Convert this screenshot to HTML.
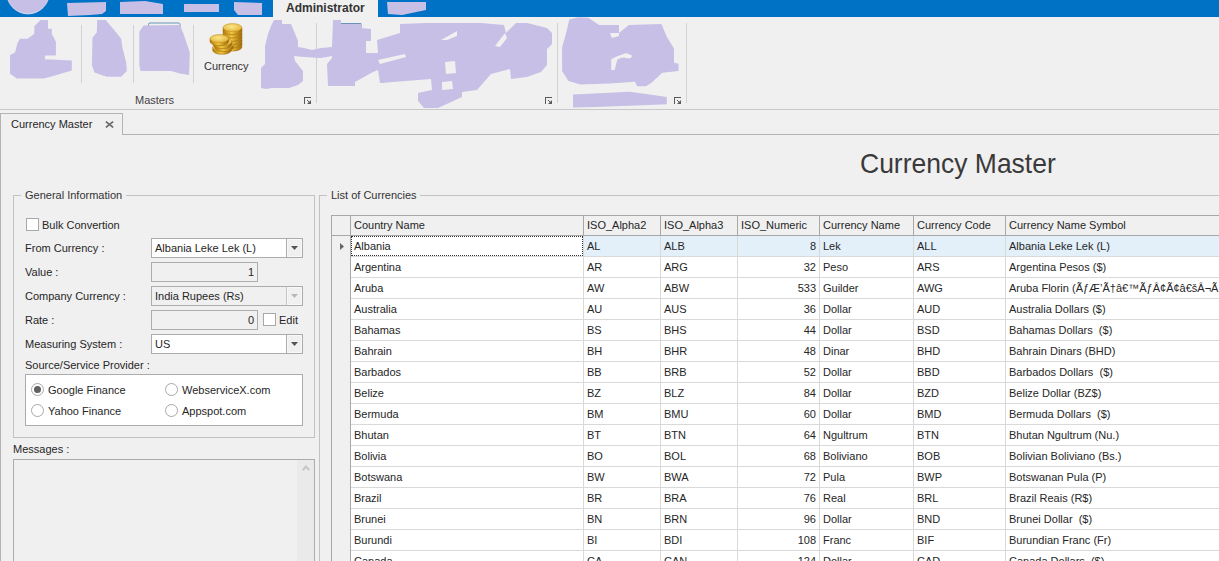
<!DOCTYPE html>
<html><head><meta charset="utf-8">
<style>
html,body{margin:0;padding:0;}
body{width:1219px;height:561px;overflow:hidden;position:relative;background:#f0f0f0;font-family:"Liberation Sans",sans-serif;font-size:11px;color:#262626;}
.a{position:absolute;}
.t{position:absolute;white-space:pre;font-size:11px;line-height:13px;}
.cb{position:absolute;box-sizing:border-box;width:13px;height:13px;border:1px solid #a8a8a8;background:#fff;}
.rb{position:absolute;box-sizing:border-box;width:13px;height:13px;border:1px solid #a8a8a8;border-radius:50%;background:#fff;}
.arr{position:absolute;width:0;height:0;border-left:4px solid transparent;border-right:4px solid transparent;border-top:4px solid #5a5a5a;}
.grid{position:absolute;left:331px;top:215px;width:888px;height:346px;overflow:hidden;background:#fff;}
.gl{position:absolute;background:#d9d9d9;}
.gc{position:absolute;white-space:nowrap;font-size:11px;line-height:13px;overflow:hidden;}
</style></head><body>

<div class="a" style="left:0px;top:0px;width:1219px;height:17px;background:#0072c6;"></div>
<div class="a" style="left:273px;top:0px;width:105px;height:17px;background:#f0f0f0;"></div>
<div class="t" style="left:286px;top:2px;font-weight:bold;font-size:12px;color:#333;">Administrator</div>
<svg class="a" style="left:0;top:0" width="1219" height="110"><g fill="#c7bfe6"><circle cx="28" cy="-7.4" r="21.3" stroke="#e8e8f4" stroke-width="0.8"/><polygon points="67,3 106,2 106,11 102,14 90,15 68,16"/><polygon points="120,2 145,1 163,4 163,14 145,14 120,14"/><polygon points="184,4 219,4 219,12 184,12"/><polygon points="234,2 262,3 262,15 238,15 234,10"/><polygon points="387,2 426,2 426,10 402,15 388,14"/></g></svg>
<div class="a" style="left:81px;top:25px;width:1px;height:58px;background:#d2d2d2;"></div>
<div class="a" style="left:133px;top:25px;width:1px;height:58px;background:#d2d2d2;"></div>
<div class="a" style="left:193px;top:25px;width:1px;height:58px;background:#d2d2d2;"></div>
<div class="a" style="left:316px;top:23px;width:1px;height:80px;background:#d2d2d2;"></div>
<div class="a" style="left:557px;top:23px;width:1px;height:80px;background:#d2d2d2;"></div>
<div class="a" style="left:686px;top:23px;width:1px;height:80px;background:#d2d2d2;"></div>
<svg class="a" style="left:0;top:0" width="1219" height="110"><g fill="#c7bfe6"><path d="M148.5 28 V24.5 Q148.5 23 150 23 H178.5 Q180 23 180 24.5 V28" fill="none" stroke="#6b93b8" stroke-width="1"/><path d="M337 28 V23.5 H361 V28" fill="none" stroke="#6b93b8" stroke-width="1"/><polygon points="40.6,20 48,20 48,28.7 51.8,28.7 51.8,33.7 55.9,41.8 55.9,55.6 44.9,55.6 44.9,59.3 71.8,60.6 71.8,70.5 52.4,76.2 43.7,78.6 16.9,78.6 10,73.7 10,55 15,52.4 17.5,43 20,38.7 27.5,38.7 34.3,33.7 34.3,26.2"/><polygon points="97.2,20 105.6,20 113.1,28.7 121.2,38.7 122.4,47.4 126.2,62.4 126.8,71.1 121.2,76.7 106.8,76.7 94.4,72.4 91.9,64.9 92.5,37.4 96.8,32.5"/><polygon points="143.6,25.6 179.8,25 183.5,33.7 189.8,52.4 189.1,74.9 179.8,73.6 171,71.1 140.5,71.1 139.3,64.9 139.3,31.8"/><polygon points="274,20 282,20 282,24 291,24 294,31 298,41 298,47 304,48 312,50 321,48 332,47 333,20 341,20 341,24 361,24 361,28 371,29 371,41 366,41 366,53 378,53 377,40 400,33 400,24 425,23 481,23 504,25 506,33 516,23 527,23 547,28 552,33 552,44 547,49 547,65 541,72 527,77 511,79 510,69 491,74 477,90 462,92 462,97 438,108 424,108 418,101 418,93 432,90 431,79 380,83 381,65 385,64 385,83 380,83 378,70 373,72 355,82 355,86 328,86 327,64 332,58 332,56 321,58 304,57 294,56 295,61 303,71 303,81 298,85 289,88 272,88 266,89 261,88 261,68 265,64 265,46 268,34 271,26"/><polygon points="569.3,19.5 578.4,17.2 588.3,17.7 599.1,24.9 619,24.9 619,33 628.9,24.9 661.4,24 666.8,36.7 674,48.4 674,62.8 678.5,63.7 678.5,71 662.3,72.8 651.4,82.7 646,86.3 637,86.3 635.2,81.8 609.9,83.6 580.2,84.5 568.4,80.9 562.1,71 562.1,47.5 566.6,31.2"/><polygon points="573,94.4 629.8,91.7 649.6,94.4 666.8,97.1 666.8,104.3 642.4,105.2 595.5,107 573,107.4"/></g><g fill="#f0f0f0"><polygon points="445,62 455,61 456,73 446,74"/><polygon points="442,82 452,81 453,89 442,90"/><polygon points="611.2,70 611.2,59.3 616.5,56.6 626.3,53 632.6,55.7 629.9,58.4 622.8,57.5 617.4,59.3 614.7,70"/><polygon points="378,60 405,54 406,57 380,64"/><polygon points="495,46 505,33 507,38 500,47"/><polygon points="441,40 457,31 457,36 447,40"/><polygon points="610,33 619,33 619,36 612,38"/></g></svg>
<svg class="a" style="left:205px;top:20px" width="42" height="38" viewBox="0 0 42 38"><defs><linearGradient id="cg" x1="0" x2="1"><stop offset="0" stop-color="#b07a08"/><stop offset="0.45" stop-color="#f2c640"/><stop offset="1" stop-color="#9a6400"/></linearGradient><radialGradient id="ct" cx="0.45" cy="0.4" r="0.7"><stop offset="0" stop-color="#fbe88a"/><stop offset="1" stop-color="#e0ac30"/></radialGradient></defs><path d="M18.1 24.1 V27.1 A9.4 4 0 0 0 36.9 27.1 V24.1 Z" fill="url(#cg)" stroke="#9a6a10" stroke-width="0.5"/><ellipse cx="27.5" cy="24.1" rx="9.4" ry="4" fill="url(#ct)" stroke="#c08a20" stroke-width="0.5"/><path d="M18.1 20.799999999999997 V23.799999999999997 A9.4 4 0 0 0 36.9 23.799999999999997 V20.799999999999997 Z" fill="url(#cg)" stroke="#9a6a10" stroke-width="0.5"/><ellipse cx="27.5" cy="20.799999999999997" rx="9.4" ry="4" fill="url(#ct)" stroke="#c08a20" stroke-width="0.5"/><path d="M18.1 17.5 V20.5 A9.4 4 0 0 0 36.9 20.5 V17.5 Z" fill="url(#cg)" stroke="#9a6a10" stroke-width="0.5"/><ellipse cx="27.5" cy="17.5" rx="9.4" ry="4" fill="url(#ct)" stroke="#c08a20" stroke-width="0.5"/><path d="M18.1 14.2 V17.2 A9.4 4 0 0 0 36.9 17.2 V14.2 Z" fill="url(#cg)" stroke="#9a6a10" stroke-width="0.5"/><ellipse cx="27.5" cy="14.2" rx="9.4" ry="4" fill="url(#ct)" stroke="#c08a20" stroke-width="0.5"/><path d="M18.1 10.899999999999999 V13.899999999999999 A9.4 4 0 0 0 36.9 13.899999999999999 V10.899999999999999 Z" fill="url(#cg)" stroke="#9a6a10" stroke-width="0.5"/><ellipse cx="27.5" cy="10.899999999999999" rx="9.4" ry="4" fill="url(#ct)" stroke="#c08a20" stroke-width="0.5"/><path d="M18.1 7.6 V10.6 A9.4 4 0 0 0 36.9 10.6 V7.6 Z" fill="url(#cg)" stroke="#9a6a10" stroke-width="0.5"/><ellipse cx="27.5" cy="7.6" rx="9.4" ry="4" fill="url(#ct)" stroke="#c08a20" stroke-width="0.5"/><path d="M7.699999999999999 27.3 V30.3 A9.3 4 0 0 0 26.3 30.3 V27.3 Z" fill="url(#cg)" stroke="#9a6a10" stroke-width="0.5"/><ellipse cx="17" cy="27.3" rx="9.3" ry="4" fill="url(#ct)" stroke="#c08a20" stroke-width="0.5"/><path d="M9.7 24.5 V27.5 A9.3 4 0 0 0 28.3 27.5 V24.5 Z" fill="url(#cg)" stroke="#9a6a10" stroke-width="0.5"/><ellipse cx="19" cy="24.5" rx="9.3" ry="4" fill="url(#ct)" stroke="#c08a20" stroke-width="0.5"/><path d="M8.2 21.6 V24.6 A9.3 4 0 0 0 26.8 24.6 V21.6 Z" fill="url(#cg)" stroke="#9a6a10" stroke-width="0.5"/><ellipse cx="17.5" cy="21.6" rx="9.3" ry="4" fill="url(#ct)" stroke="#c08a20" stroke-width="0.5"/><path d="M5.0 18.6 V21.6 A9.3 4 0 0 0 23.6 21.6 V18.6 Z" fill="url(#cg)" stroke="#9a6a10" stroke-width="0.5"/><ellipse cx="14.3" cy="18.6" rx="9.3" ry="4" fill="url(#ct)" stroke="#c08a20" stroke-width="0.5"/></svg>
<div class="t" style="left:204px;top:60px;color:#333;">Currency</div>
<div class="t" style="left:135px;top:94px;color:#444;">Masters</div>
<svg class="a" style="left:304px;top:97px" width="8" height="8" shape-rendering="crispEdges"><g fill="#5a5a5a"><rect x="0" y="0" width="7" height="1"/><rect x="0" y="0" width="1" height="7"/><rect x="3" y="3" width="1" height="1"/><rect x="4" y="4" width="1" height="1"/><path d="M7 3 V7 H3 Z" shape-rendering="auto"/></g></svg>
<svg class="a" style="left:545px;top:97px" width="8" height="8" shape-rendering="crispEdges"><g fill="#5a5a5a"><rect x="0" y="0" width="7" height="1"/><rect x="0" y="0" width="1" height="7"/><rect x="3" y="3" width="1" height="1"/><rect x="4" y="4" width="1" height="1"/><path d="M7 3 V7 H3 Z" shape-rendering="auto"/></g></svg>
<svg class="a" style="left:674px;top:97px" width="8" height="8" shape-rendering="crispEdges"><g fill="#5a5a5a"><rect x="0" y="0" width="7" height="1"/><rect x="0" y="0" width="1" height="7"/><rect x="3" y="3" width="1" height="1"/><rect x="4" y="4" width="1" height="1"/><path d="M7 3 V7 H3 Z" shape-rendering="auto"/></g></svg>
<div class="a" style="left:0px;top:109px;width:1219px;height:1px;background:#c8c8c8;"></div>
<div class="a" style="left:0;top:113px;width:123px;height:22px;box-sizing:border-box;border-left:1px solid #b4b4b4;border-top:1px solid #b4b4b4;border-right:1px solid #b4b4b4;"></div>
<div class="a" style="left:122px;top:134px;width:1097px;height:1px;background:#b4b4b4;"></div>
<div class="a" style="left:0px;top:134px;width:1px;height:427px;background:#b4b4b4;"></div>
<div class="t" style="left:11px;top:118px;">Currency Master</div>
<svg class="a" style="left:105px;top:121px" width="9" height="7"><path d="M0.9 0.6 L8.1 6.4 M8.1 0.6 L0.9 6.4" stroke="#6a6a6a" stroke-width="1.7"/></svg>
<div class="t" style="left:860px;top:148px;font-size:28px;line-height:32px;color:#3a3a3a;transform:scaleX(0.946);transform-origin:0 0;">Currency Master</div>
<div class="a" style="left:13px;top:195px;width:1px;height:243px;background:#c2c2c2;"></div>
<div class="a" style="left:314px;top:195px;width:1px;height:243px;background:#c2c2c2;"></div>
<div class="a" style="left:13px;top:437px;width:302px;height:1px;background:#c2c2c2;"></div>
<div class="a" style="left:13px;top:195px;width:8px;height:1px;background:#c2c2c2;"></div>
<div class="a" style="left:126px;top:195px;width:189px;height:1px;background:#c2c2c2;"></div>
<div class="t" style="left:25px;top:189px;color:#333;">General Information</div>
<div class="cb" style="left:26px;top:218px;"></div>
<div class="t" style="left:42px;top:219px;">Bulk Convertion</div>
<div class="t" style="left:25px;top:242px;">From Currency :</div>
<div class="t" style="left:25px;top:266px;">Value :</div>
<div class="t" style="left:25px;top:290px;">Company Currency :</div>
<div class="t" style="left:25px;top:314px;">Rate :</div>
<div class="t" style="left:25px;top:338px;">Measuring System :</div>
<div class="a" style="left:151px;top:238px;width:152px;height:20px;box-sizing:border-box;border:1px solid #acacac;background:#fff;"></div>
<div class="a" style="left:287px;top:239px;width:15px;height:18px;box-sizing:border-box;border:1px solid #f8f8f8;background:#f0f0f0;"></div>
<div class="a" style="left:286px;top:239px;width:1px;height:18px;background:#acacac;"></div>
<svg class="a" style="left:291px;top:246px" width="7" height="4"><path d="M0 0 H7 L3.5 4 Z" fill="#555"/></svg>
<div class="t" style="left:155px;top:242px;">Albania Leke Lek (L)</div>
<div class="a" style="left:151px;top:262px;width:107px;height:20px;box-sizing:border-box;border:1px solid #acacac;background:#f0f0f0;"></div>
<div class="t" style="left:248px;top:266px;width:6px;text-align:right;">1</div>
<div class="a" style="left:151px;top:286px;width:152px;height:20px;box-sizing:border-box;border:1px solid #acacac;background:#f0f0f0;"></div>
<div class="a" style="left:287px;top:287px;width:15px;height:18px;box-sizing:border-box;border:1px solid #f8f8f8;background:#f0f0f0;"></div>
<div class="a" style="left:286px;top:287px;width:1px;height:18px;background:#c4c4c4;"></div>
<svg class="a" style="left:291px;top:294px" width="7" height="4"><path d="M0 0 H7 L3.5 4 Z" fill="#b8b8b8"/></svg>
<div class="t" style="left:155px;top:290px;">India Rupees (Rs)</div>
<div class="a" style="left:151px;top:310px;width:107px;height:20px;box-sizing:border-box;border:1px solid #acacac;background:#f0f0f0;"></div>
<div class="t" style="left:246px;top:314px;width:8px;text-align:right;">0</div>
<div class="cb" style="left:263px;top:313px;"></div>
<div class="t" style="left:279px;top:314px;">Edit</div>
<div class="a" style="left:151px;top:334px;width:152px;height:20px;box-sizing:border-box;border:1px solid #acacac;background:#fff;"></div>
<div class="a" style="left:287px;top:335px;width:15px;height:18px;box-sizing:border-box;border:1px solid #f8f8f8;background:#f0f0f0;"></div>
<div class="a" style="left:286px;top:335px;width:1px;height:18px;background:#acacac;"></div>
<svg class="a" style="left:291px;top:342px" width="7" height="4"><path d="M0 0 H7 L3.5 4 Z" fill="#555"/></svg>
<div class="t" style="left:155px;top:338px;">US</div>
<div class="t" style="left:25px;top:359px;">Source/Service Provider :</div>
<div class="a" style="left:25px;top:374px;width:278px;height:52px;box-sizing:border-box;border:1px solid #acacac;background:#fff;"></div>
<div class="rb" style="left:31px;top:383px;"></div>
<div class="a" style="left:34px;top:386px;width:7px;height:7px;border-radius:50%;background:#606060;"></div>
<div class="t" style="left:48px;top:384px;">Google Finance</div>
<div class="rb" style="left:31px;top:404px;"></div>
<div class="t" style="left:48px;top:405px;">Yahoo Finance</div>
<div class="rb" style="left:165px;top:383px;"></div>
<div class="t" style="left:182px;top:384px;">WebserviceX.com</div>
<div class="rb" style="left:165px;top:404px;"></div>
<div class="t" style="left:182px;top:405px;">Appspot.com</div>
<div class="t" style="left:13px;top:443px;">Messages :</div>
<div class="a" style="left:13px;top:459px;width:302px;height:110px;box-sizing:border-box;border:1px solid #acacac;background:#f0f0f0;"></div>
<div class="a" style="left:297px;top:460px;width:17px;height:110px;background:#eaeaea;"></div>
<svg class="a" style="left:301px;top:464px" width="10" height="8"><path d="M1.8 6.2 L5 2.6 L8.2 6.2" stroke="#c6c6c6" stroke-width="2" fill="none"/></svg>
<div class="a" style="left:319px;top:195px;width:1px;height:366px;background:#c2c2c2;"></div>
<div class="a" style="left:319px;top:195px;width:8px;height:1px;background:#c2c2c2;"></div>
<div class="a" style="left:420px;top:195px;width:799px;height:1px;background:#c2c2c2;"></div>
<div class="t" style="left:331px;top:189px;color:#333;">List of Currencies</div>
<div class="a" style="left:331px;top:215px;width:888px;height:346px;background:#fff;"></div><div class="a" style="left:331px;top:215px;width:888px;height:21px;background:#f0f0f0;"></div><div class="a" style="left:583px;top:236px;width:636px;height:20px;background:#e3f0fa;"></div><div class="gl" style="left:350px;top:256px;width:869px;height:1px;"></div><div class="gl" style="left:350px;top:277px;width:869px;height:1px;"></div><div class="gl" style="left:350px;top:298px;width:869px;height:1px;"></div><div class="gl" style="left:350px;top:319px;width:869px;height:1px;"></div><div class="gl" style="left:350px;top:340px;width:869px;height:1px;"></div><div class="gl" style="left:350px;top:361px;width:869px;height:1px;"></div><div class="gl" style="left:350px;top:382px;width:869px;height:1px;"></div><div class="gl" style="left:350px;top:403px;width:869px;height:1px;"></div><div class="gl" style="left:350px;top:424px;width:869px;height:1px;"></div><div class="gl" style="left:350px;top:445px;width:869px;height:1px;"></div><div class="gl" style="left:350px;top:466px;width:869px;height:1px;"></div><div class="gl" style="left:350px;top:487px;width:869px;height:1px;"></div><div class="gl" style="left:350px;top:508px;width:869px;height:1px;"></div><div class="gl" style="left:350px;top:529px;width:869px;height:1px;"></div><div class="gl" style="left:350px;top:550px;width:869px;height:1px;"></div><div class="gl" style="left:350px;top:571px;width:869px;height:1px;"></div><div class="gl" style="left:350px;top:592px;width:869px;height:1px;"></div><div class="gl" style="left:350px;top:236px;width:1px;height:325px;"></div><div class="gl" style="left:583px;top:236px;width:1px;height:325px;"></div><div class="gl" style="left:660px;top:236px;width:1px;height:325px;"></div><div class="gl" style="left:737px;top:236px;width:1px;height:325px;"></div><div class="gl" style="left:819px;top:236px;width:1px;height:325px;"></div><div class="gl" style="left:913px;top:236px;width:1px;height:325px;"></div><div class="gl" style="left:1005px;top:236px;width:1px;height:325px;"></div><div class="a" style="left:331px;top:236px;width:19px;height:325px;background:#f0f0f0;"></div><div class="a" style="left:350px;top:236px;width:1px;height:325px;background:#a8a8a8;"></div><div class="a" style="left:331px;top:215px;width:888px;height:1px;background:#a8a8a8;"></div><div class="a" style="left:331px;top:235px;width:888px;height:1px;background:#a8a8a8;"></div><div class="a" style="left:331px;top:215px;width:1px;height:346px;background:#a8a8a8;"></div><div class="a" style="left:350px;top:216px;width:1px;height:20px;background:#a8a8a8;"></div><div class="a" style="left:583px;top:216px;width:1px;height:20px;background:#a8a8a8;"></div><div class="a" style="left:660px;top:216px;width:1px;height:20px;background:#a8a8a8;"></div><div class="a" style="left:737px;top:216px;width:1px;height:20px;background:#a8a8a8;"></div><div class="a" style="left:819px;top:216px;width:1px;height:20px;background:#a8a8a8;"></div><div class="a" style="left:913px;top:216px;width:1px;height:20px;background:#a8a8a8;"></div><div class="a" style="left:1005px;top:216px;width:1px;height:20px;background:#a8a8a8;"></div>
<div class="t" style="left:354px;top:219px;">Country Name</div>
<div class="t" style="left:587px;top:219px;">ISO_Alpha2</div>
<div class="t" style="left:664px;top:219px;">ISO_Alpha3</div>
<div class="t" style="left:741px;top:219px;">ISO_Numeric</div>
<div class="t" style="left:823px;top:219px;">Currency Name</div>
<div class="t" style="left:917px;top:219px;">Currency Code</div>
<div class="t" style="left:1009px;top:219px;">Currency Name Symbol</div>
<div class="t" style="left:354px;top:240px;">Albania</div>
<div class="t" style="left:587px;top:240px;">AL</div>
<div class="t" style="left:664px;top:240px;">ALB</div>
<div class="t" style="left:737px;top:240px;width:79px;text-align:right;">8</div>
<div class="t" style="left:823px;top:240px;">Lek</div>
<div class="t" style="left:917px;top:240px;">ALL</div>
<div class="t" style="left:1009px;top:240px;">Albania Leke Lek (L)</div>
<div class="t" style="left:354px;top:261px;">Argentina</div>
<div class="t" style="left:587px;top:261px;">AR</div>
<div class="t" style="left:664px;top:261px;">ARG</div>
<div class="t" style="left:737px;top:261px;width:79px;text-align:right;">32</div>
<div class="t" style="left:823px;top:261px;">Peso</div>
<div class="t" style="left:917px;top:261px;">ARS</div>
<div class="t" style="left:1009px;top:261px;">Argentina Pesos ($)</div>
<div class="t" style="left:354px;top:282px;">Aruba</div>
<div class="t" style="left:587px;top:282px;">AW</div>
<div class="t" style="left:664px;top:282px;">ABW</div>
<div class="t" style="left:737px;top:282px;width:79px;text-align:right;">533</div>
<div class="t" style="left:823px;top:282px;">Guilder</div>
<div class="t" style="left:917px;top:282px;">AWG</div>
<div class="t" style="left:1009px;top:282px;">Aruba Florin (ÃƒÆ’Ã†â€™ÃƒÂ¢Ã¢â€šÂ¬Ã‚Â¬ÃƒÂ¢Ã¢â€šÂ¬</div>
<div class="t" style="left:354px;top:303px;">Australia</div>
<div class="t" style="left:587px;top:303px;">AU</div>
<div class="t" style="left:664px;top:303px;">AUS</div>
<div class="t" style="left:737px;top:303px;width:79px;text-align:right;">36</div>
<div class="t" style="left:823px;top:303px;">Dollar</div>
<div class="t" style="left:917px;top:303px;">AUD</div>
<div class="t" style="left:1009px;top:303px;">Australia Dollars ($)</div>
<div class="t" style="left:354px;top:324px;">Bahamas</div>
<div class="t" style="left:587px;top:324px;">BS</div>
<div class="t" style="left:664px;top:324px;">BHS</div>
<div class="t" style="left:737px;top:324px;width:79px;text-align:right;">44</div>
<div class="t" style="left:823px;top:324px;">Dollar</div>
<div class="t" style="left:917px;top:324px;">BSD</div>
<div class="t" style="left:1009px;top:324px;">Bahamas Dollars  ($)</div>
<div class="t" style="left:354px;top:345px;">Bahrain</div>
<div class="t" style="left:587px;top:345px;">BH</div>
<div class="t" style="left:664px;top:345px;">BHR</div>
<div class="t" style="left:737px;top:345px;width:79px;text-align:right;">48</div>
<div class="t" style="left:823px;top:345px;">Dinar</div>
<div class="t" style="left:917px;top:345px;">BHD</div>
<div class="t" style="left:1009px;top:345px;">Bahrain Dinars (BHD)</div>
<div class="t" style="left:354px;top:366px;">Barbados</div>
<div class="t" style="left:587px;top:366px;">BB</div>
<div class="t" style="left:664px;top:366px;">BRB</div>
<div class="t" style="left:737px;top:366px;width:79px;text-align:right;">52</div>
<div class="t" style="left:823px;top:366px;">Dollar</div>
<div class="t" style="left:917px;top:366px;">BBD</div>
<div class="t" style="left:1009px;top:366px;">Barbados Dollars  ($)</div>
<div class="t" style="left:354px;top:387px;">Belize</div>
<div class="t" style="left:587px;top:387px;">BZ</div>
<div class="t" style="left:664px;top:387px;">BLZ</div>
<div class="t" style="left:737px;top:387px;width:79px;text-align:right;">84</div>
<div class="t" style="left:823px;top:387px;">Dollar</div>
<div class="t" style="left:917px;top:387px;">BZD</div>
<div class="t" style="left:1009px;top:387px;">Belize Dollar (BZ$)</div>
<div class="t" style="left:354px;top:408px;">Bermuda</div>
<div class="t" style="left:587px;top:408px;">BM</div>
<div class="t" style="left:664px;top:408px;">BMU</div>
<div class="t" style="left:737px;top:408px;width:79px;text-align:right;">60</div>
<div class="t" style="left:823px;top:408px;">Dollar</div>
<div class="t" style="left:917px;top:408px;">BMD</div>
<div class="t" style="left:1009px;top:408px;">Bermuda Dollars  ($)</div>
<div class="t" style="left:354px;top:429px;">Bhutan</div>
<div class="t" style="left:587px;top:429px;">BT</div>
<div class="t" style="left:664px;top:429px;">BTN</div>
<div class="t" style="left:737px;top:429px;width:79px;text-align:right;">64</div>
<div class="t" style="left:823px;top:429px;">Ngultrum</div>
<div class="t" style="left:917px;top:429px;">BTN</div>
<div class="t" style="left:1009px;top:429px;">Bhutan Ngultrum (Nu.)</div>
<div class="t" style="left:354px;top:450px;">Bolivia</div>
<div class="t" style="left:587px;top:450px;">BO</div>
<div class="t" style="left:664px;top:450px;">BOL</div>
<div class="t" style="left:737px;top:450px;width:79px;text-align:right;">68</div>
<div class="t" style="left:823px;top:450px;">Boliviano</div>
<div class="t" style="left:917px;top:450px;">BOB</div>
<div class="t" style="left:1009px;top:450px;">Bolivian Boliviano (Bs.)</div>
<div class="t" style="left:354px;top:471px;">Botswana</div>
<div class="t" style="left:587px;top:471px;">BW</div>
<div class="t" style="left:664px;top:471px;">BWA</div>
<div class="t" style="left:737px;top:471px;width:79px;text-align:right;">72</div>
<div class="t" style="left:823px;top:471px;">Pula</div>
<div class="t" style="left:917px;top:471px;">BWP</div>
<div class="t" style="left:1009px;top:471px;">Botswanan Pula (P)</div>
<div class="t" style="left:354px;top:492px;">Brazil</div>
<div class="t" style="left:587px;top:492px;">BR</div>
<div class="t" style="left:664px;top:492px;">BRA</div>
<div class="t" style="left:737px;top:492px;width:79px;text-align:right;">76</div>
<div class="t" style="left:823px;top:492px;">Real</div>
<div class="t" style="left:917px;top:492px;">BRL</div>
<div class="t" style="left:1009px;top:492px;">Brazil Reais (R$)</div>
<div class="t" style="left:354px;top:513px;">Brunei</div>
<div class="t" style="left:587px;top:513px;">BN</div>
<div class="t" style="left:664px;top:513px;">BRN</div>
<div class="t" style="left:737px;top:513px;width:79px;text-align:right;">96</div>
<div class="t" style="left:823px;top:513px;">Dollar</div>
<div class="t" style="left:917px;top:513px;">BND</div>
<div class="t" style="left:1009px;top:513px;">Brunei Dollar  ($)</div>
<div class="t" style="left:354px;top:534px;">Burundi</div>
<div class="t" style="left:587px;top:534px;">BI</div>
<div class="t" style="left:664px;top:534px;">BDI</div>
<div class="t" style="left:737px;top:534px;width:79px;text-align:right;">108</div>
<div class="t" style="left:823px;top:534px;">Franc</div>
<div class="t" style="left:917px;top:534px;">BIF</div>
<div class="t" style="left:1009px;top:534px;">Burundian Franc (Fr)</div>
<div class="t" style="left:354px;top:555px;">Canada</div>
<div class="t" style="left:587px;top:555px;">CA</div>
<div class="t" style="left:664px;top:555px;">CAN</div>
<div class="t" style="left:737px;top:555px;width:79px;text-align:right;">124</div>
<div class="t" style="left:823px;top:555px;">Dollar</div>
<div class="t" style="left:917px;top:555px;">CAD</div>
<div class="t" style="left:1009px;top:555px;">Canada Dollars  ($)</div>
<div class="a" style="left:351px;top:236px;width:232px;height:20px;box-sizing:border-box;border:1px dotted #333;"></div>
<svg class="a" style="left:340px;top:243px" width="5" height="8"><path d="M0 0 L4 3.5 L0 7 Z" fill="#666"/></svg>
</body></html>
